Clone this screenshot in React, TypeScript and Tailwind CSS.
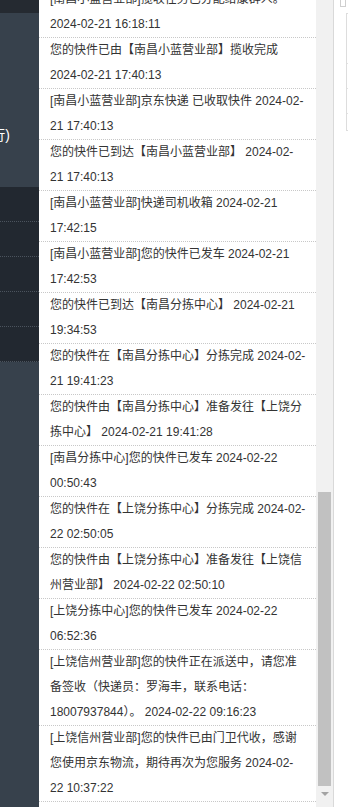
import React from 'react';

// each entry is an array of already-wrapped lines, as shown in the track panel
const traces: string[][] = [
  ['[南昌小蓝营业部]揽收任务已分配给康群人。', '2024-02-21 16:18:11'],
  ['您的快件已由【南昌小蓝营业部】揽收完成', '2024-02-21 17:40:13'],
  ['[南昌小蓝营业部]京东快递 已收取快件 2024-02-', '21 17:40:13'],
  ['您的快件已到达【南昌小蓝营业部】 2024-02-', '21 17:40:13'],
  ['[南昌小蓝营业部]快递司机收箱 2024-02-21', '17:42:15'],
  ['[南昌小蓝营业部]您的快件已发车 2024-02-21', '17:42:53'],
  ['您的快件已到达【南昌分拣中心】 2024-02-21', '19:34:53'],
  ['您的快件在【南昌分拣中心】分拣完成 2024-02-', '21 19:41:23'],
  ['您的快件由【南昌分拣中心】准备发往【上饶分', '拣中心】 2024-02-21 19:41:28'],
  ['[南昌分拣中心]您的快件已发车 2024-02-22', '00:50:43'],
  ['您的快件在【上饶分拣中心】分拣完成 2024-02-', '22 02:50:05'],
  ['您的快件由【上饶分拣中心】准备发往【上饶信', '州营业部】 2024-02-22 02:50:10'],
  ['[上饶分拣中心]您的快件已发车 2024-02-22', '06:52:36'],
  [
    '[上饶信州营业部]您的快件正在派送中，请您准',
    '备签收（快递员：罗海丰，联系电话：',
    '18007937844）。 2024-02-22 09:16:23',
  ],
  [
    '[上饶信州营业部]您的快件已由门卫代收，感谢',
    '您使用京东物流，期待再次为您服务 2024-02-',
    '22 10:37:22',
  ],
];

const Sidebar = () => (
  <aside className="w-[39px] shrink-0 flex flex-col bg-[#37414c] overflow-hidden">
    <div className="h-[13px] bg-[#252a31]" />
    <div className="h-[174px] pt-[112px]">
      <div className="flex justify-end overflow-hidden pr-[29px] whitespace-nowrap text-[14px] leading-[20px] text-white">
        (南昌银行)
      </div>
    </div>
    {[0, 1, 2, 3, 4].map(i => (
      <div key={i} className="h-[35px] bg-[#222830] border-b border-dotted border-[#4b535d]" />
    ))}
    <div className="flex-1" />
  </aside>
);

const Scrollbar = () => (
  <div className="w-[17px] shrink-0 flex flex-col bg-[#f1f1f1]">
    <div className="h-[492px]" />
    <div className="h-[294px] mx-[2px] bg-[#c1c1c1]" />
    <div className="h-[4px]" />
    <div className="h-[17px] flex justify-center pt-[2px]">
      <div className="w-0 h-0 border-x-[4px] border-x-transparent border-t-[4px] border-t-[#a3a3a3]" />
    </div>
  </div>
);

const RightEdge = () => (
  <div className="w-[15px] shrink-0 border-l border-[#d9d9d9] bg-white overflow-hidden">
    <div className="ml-[6px] h-[7px] w-[6px] border border-t-0 border-[#cfcfcf]" />
    <div className="mt-[6px] ml-[12px] w-[20px] border-l border-t border-[#dddddd]">
      <div className="h-[50px] border-b border-[#e3e3e3]" />
      <div className="h-[25px] border-b border-[#e3e3e3]" />
      <div className="h-[25px] border-b border-[#e3e3e3]" />
      <div className="h-[17px] border-b border-[#dddddd]" />
    </div>
  </div>
);

const App = () => {
  return (
    <div
      className="flex h-[807px] w-[348px] overflow-hidden bg-white"
      style={{ fontFamily: '"Liberation Sans", "Noto Sans CJK SC", Arial, sans-serif' }}
    >
      <Sidebar />

      <main className="w-[277px] shrink-0 overflow-hidden bg-white">
        <ul className="-mt-[13px]">
          {traces.map((lines, i) => (
            <li key={i} className="pl-[11px] border-b border-dotted border-[#c8c8c8] text-[12px] leading-[25px] text-[#333]">
              {lines.map((line, j) => (
                <div key={j} className="whitespace-nowrap">{line}</div>
              ))}
            </li>
          ))}
        </ul>
      </main>

      <Scrollbar />
      <RightEdge />
    </div>
  );
};

export default App;
